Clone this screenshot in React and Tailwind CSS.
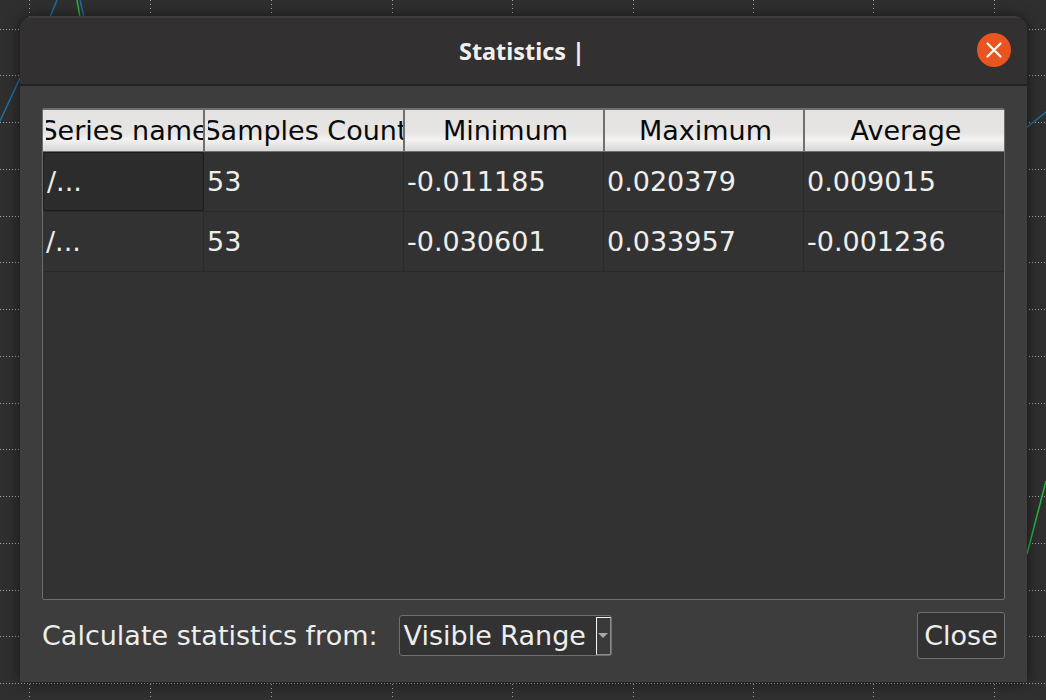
import React from 'react';

const COLUMNS = ['Series name', 'Samples Count', 'Minimum', 'Maximum', 'Average'];
const ROWS = [
  ['/...', '53', '-0.011185', '0.020379', '0.009015'],
  ['/...', '53', '-0.030601', '0.033957', '-0.001236'],
];
const GRID_X = [29, 150, 271, 392, 512, 633, 753, 873, 994];
const GRID_Y = [29, 75.5, 122, 169, 216, 262, 309, 356, 403, 449, 496, 543, 590, 636, 683];

// Plot that sits behind the dialog
const PlotBackground = () => (
  <svg className="absolute inset-0" width="1046" height="700">
    {GRID_X.map((x) => (
      <line key={x} x1={x + 0.5} y1="0" x2={x + 0.5} y2="700" stroke="#a8a8a8" strokeDasharray="1 3" />
    ))}
    {GRID_Y.map((y) => (
      <line key={y} x1="0" y1={Math.floor(y) + 0.5} x2="1046" y2={Math.floor(y) + 0.5} stroke="#a8a8a8" strokeDasharray="1 2" />
    ))}
    <g fill="none" strokeWidth="1.5">
      <path d="M0 121 L21 76" stroke="#1f6fa8" />
      <path d="M50 17 L57 0" stroke="#1f6fa8" />
      <path d="M84 17 L80 0" stroke="#1f6fa8" />
      <path d="M80 17 L77 0" stroke="#22b83c" />
      <path d="M1026 128 L1046 112" stroke="#1f6fa8" />
      <path d="M1027 554 L1046 481" stroke="#22b83c" />
    </g>
  </svg>
);

const HeaderCell = ({ label, index }) => (
  <div
    className={`flex shrink-0 items-center pl-[3px] text-[#0a0a0a] bg-[linear-gradient(to_bottom,#e4e3e2_0%,#e6e5e4_55%,#f3f2f1_72%,#d8d7d5_100%)] ${
      index === 0 ? 'w-[162px]' : index === 4 ? 'w-[199px]' : 'w-[200px]'
    } ${index === 4 ? '' : 'border-r-2 border-[#6f6f6f]'}`}
  >
    <div className="flex w-full justify-center overflow-hidden whitespace-nowrap leading-[36px]">
      <span className="shrink-0">{label}</span>
    </div>
  </div>
);

const App = () => {
  return (
    <div
      className="relative w-[1046px] h-[700px] overflow-hidden bg-[#2f2f2f] pt-[16px] pl-[20px]"
      style={{ fontFamily: '"DejaVu Sans", sans-serif' }}
    >
      <PlotBackground />

      <div className="relative w-[1007px] h-[666px] flex flex-col bg-[#3d3d3d] rounded-t-[14px] overflow-hidden shadow-[0_0_14px_rgba(0,0,0,0.55)]">
        {/* Title bar */}
        <div className="relative h-[70px] shrink-0 flex items-center justify-center pr-[3px] pt-[2px] bg-[#323030] border-t-2 border-[#403e3e] border-b-2 border-b-[#232222]">
          <span
            className="text-[23.4px] font-bold text-[#f2f0ee]"
            style={{ fontFamily: '"Noto Sans", sans-serif' }}
          >
            Statistics |
          </span>
          <button className="absolute right-[16px] top-[15px] w-[34px] h-[34px] rounded-full bg-[#e95420] flex items-center justify-center">
            <svg width="16" height="16" viewBox="0 0 16 16">
              <path d="M1.5 1.5 L14.5 14.5 M14.5 1.5 L1.5 14.5" stroke="#fff" strokeWidth="2.2" strokeLinecap="round" />
            </svg>
          </button>
        </div>

        <div className="flex-1 flex flex-col px-[22px] pt-[22px] text-[27px] leading-none">
          {/* Statistics table */}
          <div className="h-[492px] w-[963px] border border-[#6f6f6f] rounded-[2px] bg-[#323232]">
            <div className="flex border-y border-[#6f6f6f] h-[43px]">
              {COLUMNS.map((label, i) => (
                <HeaderCell key={label} label={label} index={i} />
              ))}
            </div>
            {ROWS.map((row, r) => (
              <div key={r} className="flex h-[60px] border-b border-[#2a2a2a] text-[#eeeeec]">
                {row.map((value, c) => (
                  <div
                    key={c}
                    className={`shrink-0 flex items-center overflow-hidden pl-[3px] ${
                      c === 0 ? 'w-[161px]' : 'w-[200px]'
                    } ${
                      r === 0 && c === 0
                        ? 'bg-[#2c2c2c] border border-[#1c1c1c] rounded-[2px]'
                        : 'border-r border-[#2a2a2a]'
                    }`}
                  >
                    {value}
                  </div>
                ))}
              </div>
            ))}
          </div>

          {/* Footer controls */}
          <div className="flex items-center mt-[12px] text-[#eeeeec]">
            <span>Calculate statistics from:</span>
            <div className="ml-[21px] w-[213px] h-[41px] flex items-center justify-between bg-[#323232] border border-[#6f6f6f] rounded-[3px] pl-[4px]">
              <span>Visible Range</span>
              <div className="w-[15px] h-[38px] flex items-center justify-center border border-[#f4f4f4] border-r-[#8a8a8a] border-b-[#8a8a8a] bg-[#3a3a3a]">
                <div className="w-0 h-0 border-x-[5px] border-x-transparent border-t-[5px] border-t-[#a8a8a8]" />
              </div>
            </div>
            <button className="ml-auto w-[88px] h-[47px] bg-[#323232] border border-[#6f6f6f] rounded-[3px] text-[#eeeeec] leading-none">
              Close
            </button>
          </div>
        </div>
      </div>
    </div>
  );
};

export default App;
